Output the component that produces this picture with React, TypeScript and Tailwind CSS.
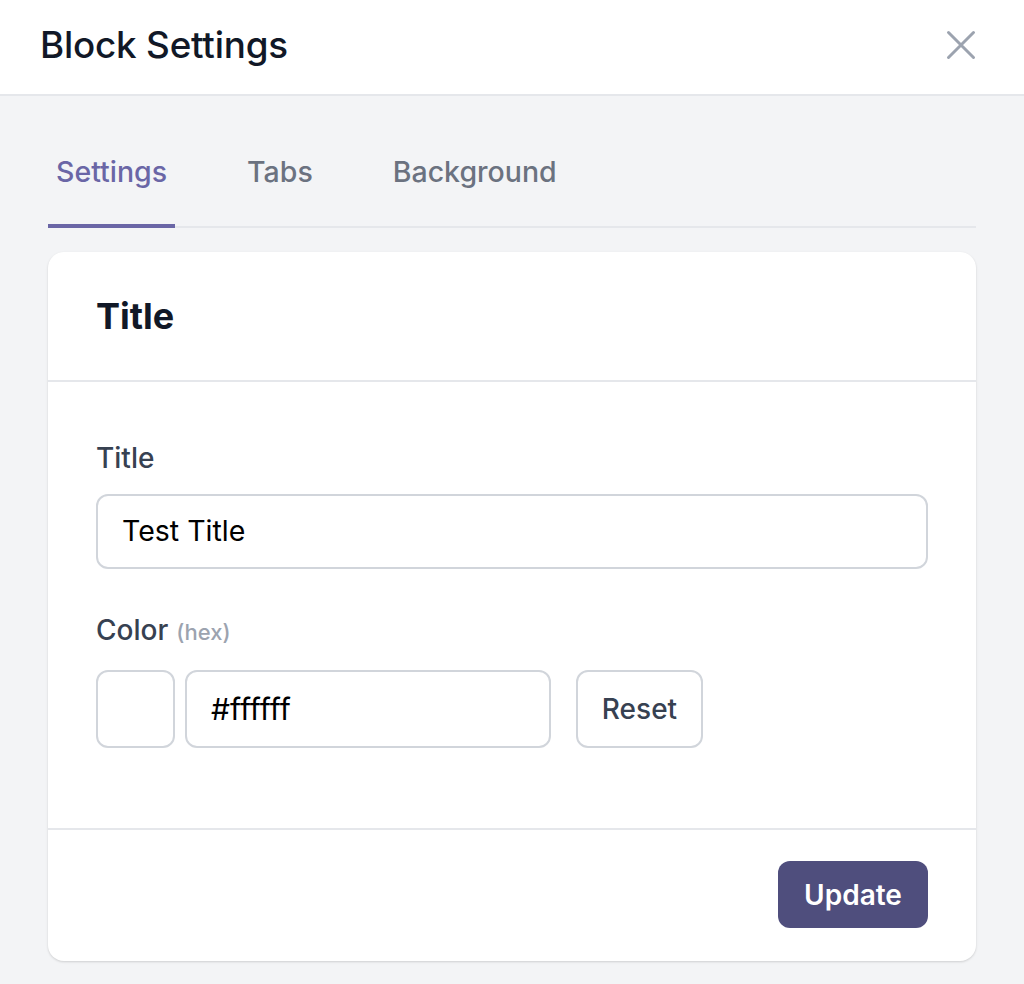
import React from "react";

export default function App() {
  return (
    <div className="min-h-[984px] bg-[#f3f4f6] font-['Inter',sans-serif]">
      <div className="h-[96px] bg-white border-b-2 border-[#e5e7eb] flex items-center justify-between pl-10 pr-[48px] pb-[4px]">
        <h1 className="text-[36.8px] leading-[40px] font-medium text-[#111827] tracking-[-0.2px]">Block Settings</h1>
        <svg width="30" height="30" viewBox="0 0 30 30" fill="none" stroke="#9ca3af" strokeWidth="3" strokeLinecap="round">
          <path d="M2.5 2.5 L27.5 27.5 M27.5 2.5 L2.5 27.5" />
        </svg>
      </div>
      <div className="px-12 pt-[56px] pb-[22px]">
        <div className="flex gap-16 border-b-2 border-[#e5e7eb]">
          <div className="px-2 pb-[32px] -mb-[2px] border-b-4 border-[#6a66a6] text-[28.5px] leading-[40px] font-medium text-[#6a66a6]">Settings</div>
          <div className="px-2 pb-[32px] -mb-[2px] border-b-4 border-transparent text-[28.5px] leading-[40px] font-medium text-[#6b7280]">Tabs</div>
          <div className="px-2 pb-[32px] -mb-[2px] border-b-4 border-transparent text-[28.5px] leading-[40px] font-medium text-[#6b7280]">Background</div>
        </div>
        <div className="mt-6 bg-white rounded-[16px] shadow-[0_1px_3px_rgba(0,0,0,0.1),0_1px_2px_rgba(0,0,0,0.06)]">
          <div className="px-12 py-12 border-b-2 border-[#e5e7eb]">
            <h2 className="text-[36px] leading-[32px] font-bold text-[#111827]">Title</h2>
          </div>
          <div className="px-12 pt-[56px] pb-[80px]">
            <label className="block text-[28px] leading-[40px] font-medium text-[#374151] mb-[16px]">Title</label>
            <div className="h-[75px] rounded-[12px] border-2 border-[#d1d5db] bg-white px-6 flex items-center text-[28.5px] text-black">Test Title</div>
            <div className="mt-[41px] flex items-baseline gap-2 text-[28px] leading-[40px] font-medium text-[#374151] mb-[18px]">
              <span>Color</span>
              <span className="text-[22px] text-[#9ca3af]">(hex)</span>
            </div>
            <div className="flex items-center">
              <div className="w-[79px] h-[78px] rounded-[12px] border-2 border-[#d1d5db] bg-white" />
              <div className="ml-[10px] w-[366px] h-[78px] rounded-[12px] border-2 border-[#d1d5db] bg-white px-6 flex items-center text-[30px] text-black">#ffffff</div>
              <div className="ml-[25px] w-[127px] h-[78px] rounded-[12px] border-2 border-[#d1d5db] bg-white flex items-center justify-center text-[28px] font-medium text-[#374151]">Reset</div>
            </div>
          </div>
          <div className="border-t-2 border-[#e5e7eb] px-12 pt-[31px] pb-[33px] flex justify-end">
            <div className="w-[150px] h-[67px] rounded-[12px] bg-[#4f4e7d] text-white text-[28px] font-semibold flex items-center justify-center">Update</div>
          </div>
        </div>
      </div>
    </div>
  );
}
